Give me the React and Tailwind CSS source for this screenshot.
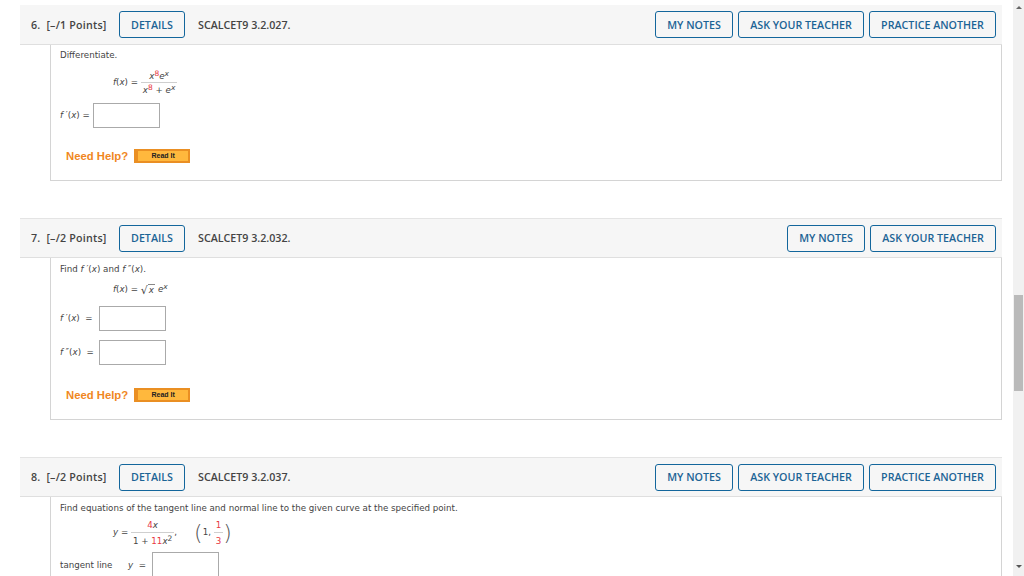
const V = "font-['DejaVu_Sans',Verdana,sans-serif]";

function Btn({ children, className = "" }) {
  return (
    <button className={`h-[27px] border border-[#13669c] rounded-[3px] text-[#1c6495] text-[10.7px] font-semibold pt-px flex items-center justify-center bg-[#f6f6f6] font-['Open_Sans',sans-serif] ${className}`}>
      {children}
    </button>
  );
}

function Header({ num, pts, code, practice, className = "h-[40px]" }) {
  return (
    <div className={`bg-[#f6f6f6] border-b border-[#dfdfdf] flex items-center pl-[11px] pr-[6px] font-['Open_Sans',sans-serif] ${className}`}>
      <span className="w-[88px] text-[10.7px] font-semibold text-[#444] whitespace-pre pt-px tracking-[0.2px]">{`${num}.  [–/${pts} Points]`}</span>
      <Btn className="w-[66px]">DETAILS</Btn>
      <span className="ml-[13px] text-[10.7px] font-semibold text-[#444] pt-px">{code}</span>
      <div className="ml-auto flex gap-[5px]">
        <Btn className="w-[78px]">MY NOTES</Btn>
        <Btn className="w-[126px]">ASK YOUR TEACHER</Btn>
        {practice && <Btn className="w-[127px]">PRACTICE ANOTHER</Btn>}
      </div>
    </div>
  );
}

function Help({ className = "" }) {
  return (
    <div className={`flex items-center gap-[6px] ml-[6px] ${className}`}>
      <span className="text-[11.3px] font-bold text-[#f0871e] font-['Liberation_Sans',sans-serif]">Need Help?</span>
      <span className="w-[56px] h-[14px] bg-[#ffb83d] border-2 border-[#ea8f23] border-l-[4px] flex items-center justify-center text-[7px] font-bold text-[#222] font-['Liberation_Sans',sans-serif]">Read It</span>
    </div>
  );
}

function Box({ className = "" }) {
  return <div className={`w-[67px] h-[25px] bg-white border border-[#aaa] ${className}`} />;
}

const R = ({ children }) => <span className="text-[#e8383f]">{children}</span>;
const I = ({ children }) => <i className="italic">{children}</i>;
const Sup = ({ children }) => <span className="relative -top-[3px] text-[7.5px] leading-none">{children}</span>;

function Frac({ top, bottom, className = "", lh = "leading-[12px]" }) {
  return (
    <span className={`inline-flex flex-col items-center text-center ${className}`}>
      <span className={`${lh} px-[2px]`}>{top}</span>
      <span className="w-full h-px bg-[#cfcfcf]" />
      <span className={`${lh} px-[2px] mt-[1px]`}>{bottom}</span>
    </span>
  );
}

export default function App() {
  return (
    <div className="flex h-[576px] w-[1024px] overflow-hidden bg-white">
      <main className="w-[1013px] pl-[20px] pr-[11px] pt-[5px]">
        <section className="h-[175px]">
          <Header num="6" pts="1" code="SCALCET9 3.2.027." practice />
          <div className={`${V} ml-[30px] h-[136px] border-l border-r border-b border-[#d4d4d4] pl-[9px] text-[8.7px] text-[#444]`}>
            <p className="pt-[4px] leading-[12px]">Differentiate.</p>
            <div className="flex items-center ml-[53px] mt-[9px] h-[26px] whitespace-pre">
              <span><I>f</I>(<I>x</I>) = </span>
              <Frac top={<><I>x</I><Sup><R>8</R></Sup><I>e</I><Sup><I>x</I></Sup></>} bottom={<><I>x</I><Sup><R>8</R></Sup> + <I>e</I><Sup><I>x</I></Sup></>} />
            </div>
            <div className="flex items-center mt-[7px]">
              <span className="w-[33px] whitespace-pre"><I>f</I> ′(<I>x</I>) =</span>
              <Box />
            </div>
            <Help className="mt-[20px]" />
          </div>
        </section>

        <section className="mt-[38px] h-[202px] border-t border-[#e4e4e4]">
          <Header num="7" pts="2" code="SCALCET9 3.2.032." className="h-[39px]" />
          <div className={`${V} ml-[30px] h-[162px] border-l border-r border-b border-[#d4d4d4] pl-[9px] text-[8.7px] text-[#444]`}>
            <p className="pt-[5px] leading-[12px]">Find <I>f</I> ′(<I>x</I>) and <I>f</I> ″(<I>x</I>).</p>
            <div className="flex items-center ml-[53px] mt-[8px] h-[14px] whitespace-pre">
              <span><I>f</I>(<I>x</I>) = </span>
              <span className="text-[11px] leading-none">√</span>
              <span className="border-t border-[#888] leading-[11px] px-px"><I>x</I></span>
              <span className="ml-[3px]"><I>e</I><Sup><I>x</I></Sup></span>
            </div>
            <div className="flex items-center mt-[9px]">
              <span className="w-[39px] whitespace-pre"><I>f</I> ′(<I>x</I>)  =</span>
              <Box />
            </div>
            <div className="flex items-center mt-[9px]">
              <span className="w-[39px] whitespace-pre"><I>f</I> ″(<I>x</I>)  =</span>
              <Box />
            </div>
            <Help className="mt-[22px]" />
          </div>
        </section>

        <section className="mt-[37px] border-t border-[#e4e4e4]">
          <Header num="8" pts="2" code="SCALCET9 3.2.037." practice className="h-[39px]" />
          <div className={`${V} ml-[30px] h-[91px] border-l border-r border-[#d4d4d4] pl-[9px] text-[8.7px] text-[#444]`}>
            <p className="pt-[5px] leading-[12px]">Find equations of the tangent line and normal line to the given curve at the specified point.</p>
            <div className="flex items-center ml-[53px] mt-[5px] h-[28px] whitespace-pre">
              <span><I>y</I> = </span>
              <Frac lh="leading-[14px]" top={<><R>4</R><I>x</I></>} bottom={<>1 + <R>11</R><I>x</I><Sup>2</Sup></>} />
              <span>,</span>
              <span className="ml-[17px] text-[22px] font-extralight leading-none text-[#555]">(</span>
              <span>1, </span>
              <Frac lh="leading-[14px]" top={<R>1</R>} bottom={<R>3</R>} />
              <span className="text-[22px] font-extralight leading-none text-[#555]">)</span>
            </div>
            <div className="flex items-center mt-[5px]">
              <span className="w-[68px] whitespace-pre pt-[2px]">tangent line</span>
              <span className="w-[24px] whitespace-pre pt-[2px]"><I>y</I>  =</span>
              <Box />
            </div>
          </div>
        </section>
      </main>
      <aside className="w-[11px] h-[576px] bg-[#f1f1f1] flex flex-col items-center">
        <div className="mt-[6px] w-0 h-0 border-l-[3px] border-r-[3px] border-b-[3px] border-l-transparent border-r-transparent border-b-[#666]" />
        <div className="mt-[286px] w-[9px] h-[96px] bg-[#bababa]" />
        <div className="mt-[174px] w-0 h-0 border-l-[3px] border-r-[3px] border-t-[3px] border-l-transparent border-r-transparent border-t-[#555]" />
      </aside>
    </div>
  );
}
